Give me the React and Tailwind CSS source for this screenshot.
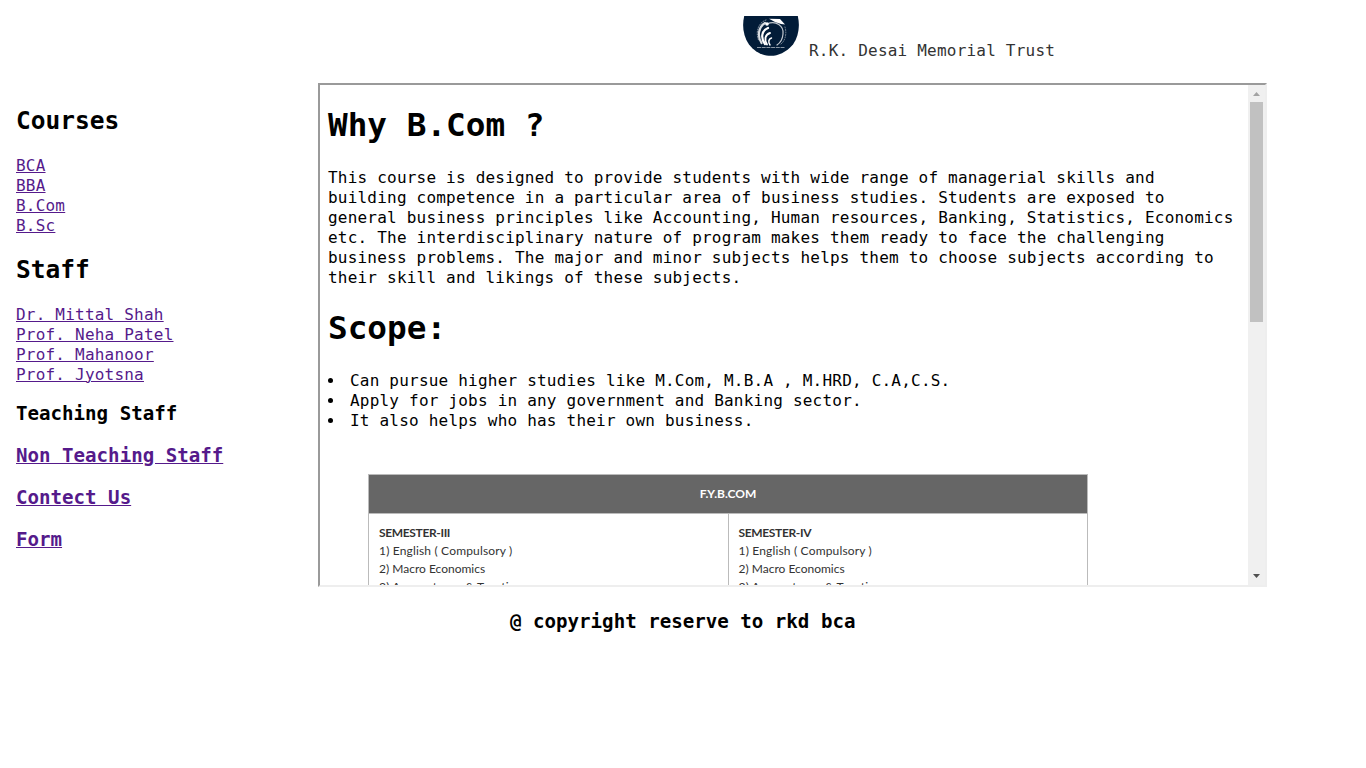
function Logo() {
  return (
    <svg width="56" height="40" viewBox="0 0 56 40" className="shrink-0">
      <path d="M1.2 0H54.8C57 9 56 20 50 28.500C43 36.500 35 39.800 28 39.800C20 39.800 12 36.500 6 28.500C0 20 -1 9 1.200 0Z" fill="#021c38" />
      <g fill="none" stroke="#fff" strokeLinecap="round">
        <path d="M22 7C15.500 11 14 20 18.500 27" strokeWidth="2.200" opacity=".85" />
        <path d="M25 12C18.500 14.500 17.500 22 22 28" strokeWidth="2.200" />
        <path d="M27 17C22 18.500 21 24 24 28.500" strokeWidth="1.900" />
        <path d="M28.500 22C25.500 23 25 26 27 29" strokeWidth="1.500" />
        <path d="M24 8C33 4 41 10 40 18C39.500 24 37 27 34 29" strokeWidth="1.200" opacity=".75" />
        <path d="M23 4C15 7 12.500 16 15.500 24" strokeWidth=".9" strokeDasharray="1 1.500" opacity=".6" />
        <path d="M42 11C44 18 42 25 38 28" strokeWidth=".9" strokeDasharray="1 1.500" opacity=".5" />
      </g>
      <path d="M14 31.500H42" stroke="#fff" strokeWidth=".9" strokeDasharray="4 .7" opacity=".6" />
      <path d="M26 2.800L37 3L42 8.500L38 8L32 6Z" fill="#fff" />
      <circle cx="24" cy="8" r="1.800" fill="#fff" />
    </svg>
  );
}

function Semester({ title }) {
  return (
    <div className="flex-1 pl-[10px] pt-[10px] text-[12px] leading-[18px] text-[#333] whitespace-nowrap">
      <p className="font-bold tracking-[-0.35px]">{title}</p>
      <p className="tracking-[0.17px]">1) English ( Compulsory )</p>
      <p>2) Macro Economics</p>
      <p className="tracking-[0.17px]">3) Accountancy &amp; Taxation</p>
    </div>
  );
}

const courses = ["BCA", "BBA", "B.Com", "B.Sc"];
const staff = ["Dr. Mittal Shah", "Prof. Neha Patel", "Prof. Mahanoor", "Prof. Jyotsna"];
const pages = ["Non Teaching Staff", "Contect Us", "Form"];
const scope = [
  "Can pursue higher studies like M.Com, M.B.A , M.HRD, C.A,C.S.",
  "Apply for jobs in any government and Banking sector.",
  "It also helps who has their own business.",
];

function LinkList({ items }) {
  return (
    <ul className="text-[#551a8b]">
      {items.map((t) => (
        <li key={t}><a href="#" className="underline decoration-1 underline-offset-1">{t}</a></li>
      ))}
    </ul>
  );
}

export default function App() {
  return (
    <div className="h-[768px] w-[1366px] overflow-hidden bg-white pt-4 font-['DejaVu_Sans_Mono',monospace] text-[16px] leading-5 tracking-[0.21px] text-black">
      <header className="flex h-[67px] pl-[743px] text-[#333]">
        <Logo />
        <p className="ml-[10px] mt-[25px] whitespace-nowrap">R.K. Desai Memorial Trust</p>
      </header>
      <div className="flex h-[504px]">
        <nav className="w-[318px] pl-4 pt-[23px]">
          <h2 className="mb-[20px] text-[24.5px] font-bold leading-[30px] tracking-normal">Courses</h2>
          <LinkList items={courses} />
          <h2 className="mb-[20px] mt-[19px] text-[24.5px] font-bold leading-[30px] tracking-normal">Staff</h2>
          <LinkList items={staff} />
          <h3 className="mt-[17px] text-[19.14px] font-bold leading-6 tracking-normal">Teaching Staff</h3>
          {pages.map((t) => (
            <h3 key={t} className="mt-[18px] text-[19.14px] font-bold leading-6 tracking-normal text-[#551a8b]">
              <a href="#" className="underline">{t}</a>
            </h3>
          ))}
        </nav>
        <main className="flex h-[504px] w-[949px] overflow-hidden border-2 border-b-[#eee] border-l-[#9a9a9a] border-r-[#eee] border-t-[#9a9a9a]">
          <div className="h-[500px] w-[928px] overflow-hidden pl-2 pr-2 pt-5">
            <h1 className="mb-[23px] text-[32.7px] font-bold leading-10 tracking-normal">Why B.Com ?</h1>
            <p>
              This course is designed to provide students with wide range of managerial skills and building competence in a
              particular area of business studies. Students are exposed to general business principles like Accounting, Human
              resources, Banking, Statistics, Economics etc. The interdisciplinary nature of program makes them ready to face
              the challenging business problems. The major and minor subjects helps them to choose subjects according to their
              skill and likings of these subjects.
            </p>
            <h1 className="mb-[23px] mt-[20px] text-[32.7px] font-bold leading-10 tracking-normal">Scope:</h1>
            <ul>
              {scope.map((t) => (
                <li key={t} className="flex items-center">
                  <span className="mb-px mr-[17px] size-[5px] rounded-full bg-black" />
                  {t}
                </li>
              ))}
            </ul>
            <section className="ml-10 mt-[43px] w-[720px] border border-[#bbb] font-['Lato',sans-serif] tracking-normal">
              <h4 className="h-[39px] border-b border-[#bbb] bg-[#666] text-center text-[12px] font-bold leading-[38px] text-white">F.Y.B.COM</h4>
              <div className="flex h-[180px] divide-x divide-[#bbb]">
                <Semester title="SEMESTER-III" />
                <Semester title="SEMESTER-IV" />
              </div>
            </section>
          </div>
          <aside className="flex w-[17px] flex-col items-center bg-[#f0f0f0]">
            <svg width="17" height="17" viewBox="0 0 17 17" className="shrink-0"><path d="M5 11L8.500 7L12 11Z" fill="#a3a3a3" /></svg>
            <div className="h-[220px] w-[13px] bg-[#c1c1c1]" />
            <svg width="17" height="17" viewBox="0 0 17 17" className="mt-auto shrink-0"><path d="M5 6L8.500 10L12 6Z" fill="#505050" /></svg>
          </aside>
        </main>
      </div>
      <footer className="mt-[23px] pl-[510px] text-[19.14px] font-bold leading-6 tracking-normal">@ copyright reserve to rkd bca</footer>
    </div>
  );
}
